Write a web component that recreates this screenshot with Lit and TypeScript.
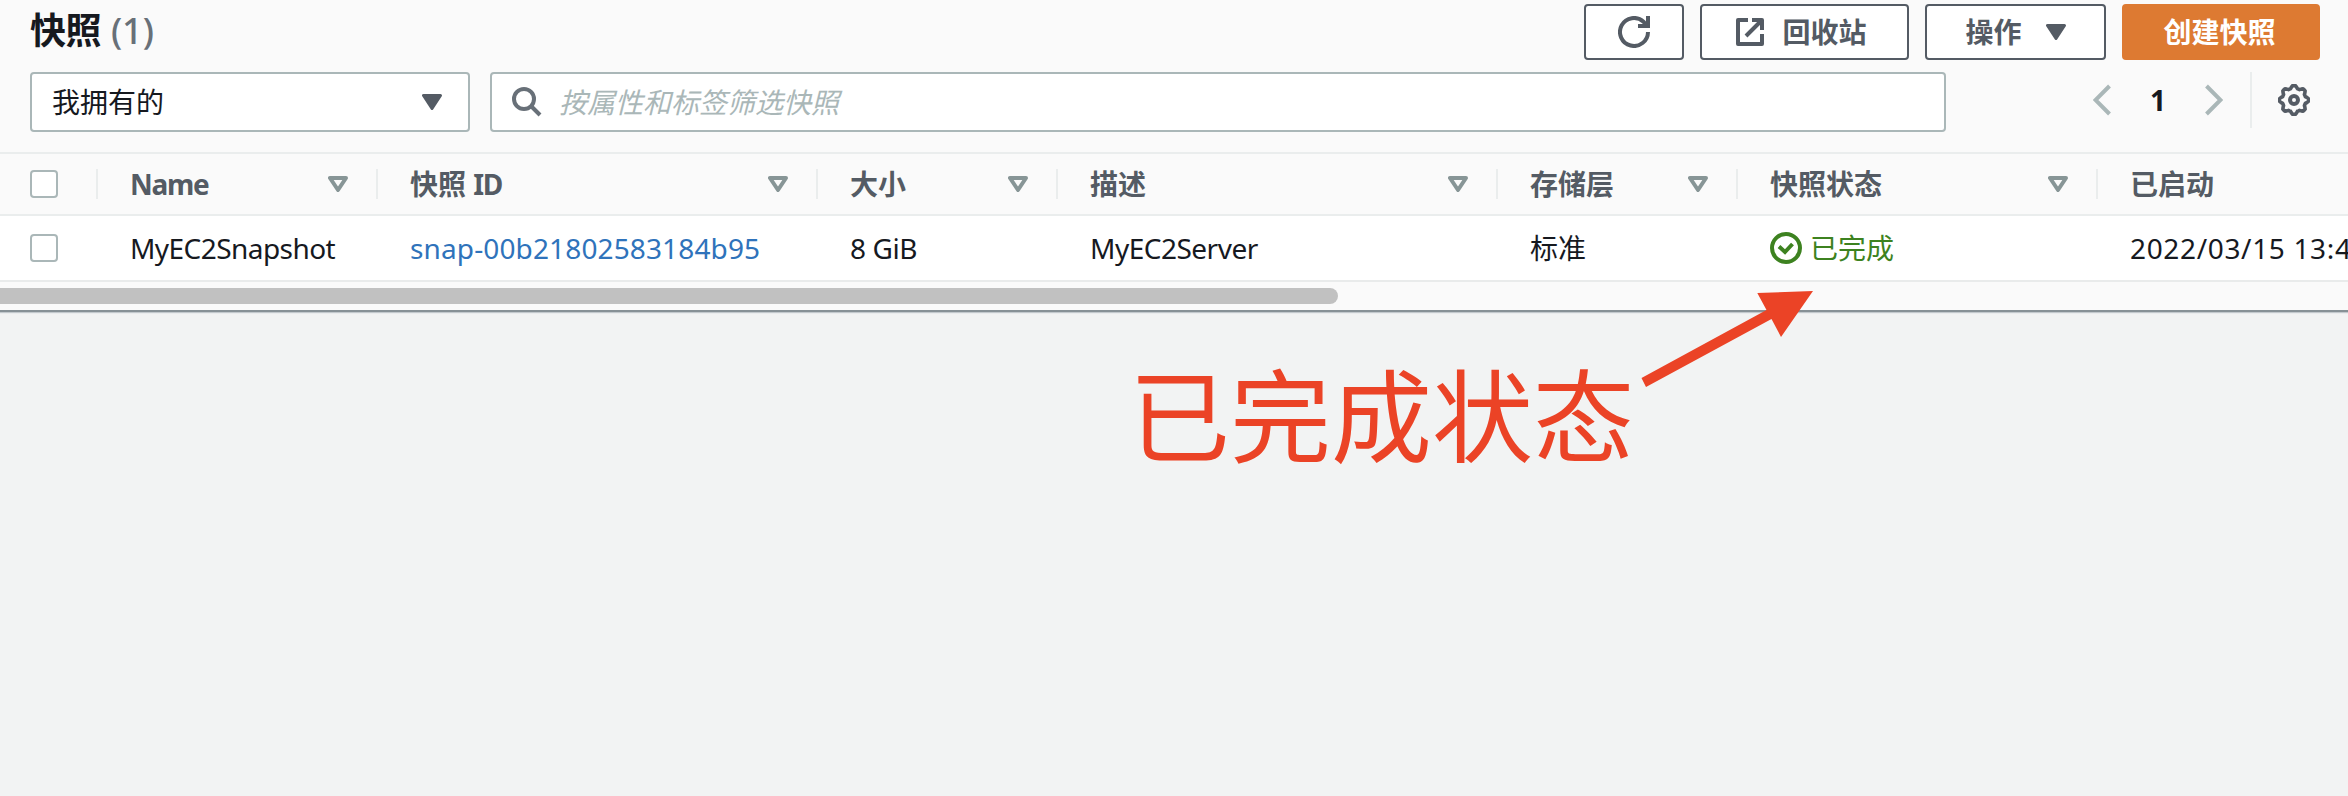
import { LitElement, html, css, svg, nothing } from "lit";
import { customElement } from "lit/decorators.js";
import { styleMap } from "lit/directives/style-map.js";

interface Column {
  label: unknown;
  width: number;
  sortable: boolean;
  value: unknown;
}

const gearOutline = Array.from({ length: 64 }, (_, i) => {
  const a = (i / 64) * Math.PI * 2;
  const r = 13.1 + 1.3 * Math.max(-1, Math.min(1, 1.8 * Math.cos(8 * a)));
  return `${(16 + r * Math.cos(a)).toFixed(2)},${(16 + r * Math.sin(a)).toFixed(2)}`;
}).join(" ");

const iconRefresh = svg`<svg class="icon" width="32" height="32" viewBox="0 0 32 32">
  <path d="M30 16A14 14 0 1 1 25.500 5.700L29 10" fill="none" stroke="currentColor" stroke-width="4"/>
  <path d="M30 0v10H20" fill="none" stroke="currentColor" stroke-width="4"/></svg>`;

const iconExternal = svg`<svg class="icon" width="28" height="28" viewBox="0 0 28 28">
  <path d="M12 2H2v24h24V16M16 2h10v10M26 2L10 18" fill="none" stroke="currentColor" stroke-width="4" stroke-linejoin="round"/></svg>`;

const iconCaret = svg`<svg class="icon" width="20" height="16" viewBox="0 0 20 16">
  <path d="M1.500 1.500h17L10 14.500z" fill="currentColor" stroke="currentColor" stroke-width="3" stroke-linejoin="round"/></svg>`;

const iconSort = svg`<svg class="icon" width="20" height="16" viewBox="0 0 20 16">
  <path d="M2 2h16l-8 12z" fill="none" stroke="currentColor" stroke-width="4" stroke-linejoin="round"/></svg>`;

const iconSearch = svg`<svg class="icon" width="30" height="30" viewBox="0 0 30 30">
  <circle cx="12" cy="12" r="10" fill="none" stroke="currentColor" stroke-width="4"/>
  <path d="M19 19l9 9" stroke="currentColor" stroke-width="4"/></svg>`;

const iconPrev = svg`<svg class="icon" width="18" height="32" viewBox="0 0 18 32">
  <path d="M16.500 2L2.500 16l14 14" fill="none" stroke="currentColor" stroke-width="4"/></svg>`;

const iconNext = svg`<svg class="icon" width="18" height="32" viewBox="0 0 18 32">
  <path d="M1.500 2l14 14-14 14" fill="none" stroke="currentColor" stroke-width="4"/></svg>`;

const iconGear = svg`<svg class="icon" width="32" height="32" viewBox="0 0 32 32">
  <polygon points=${gearOutline} fill="none" stroke="currentColor" stroke-width="3.600" stroke-linejoin="round"/>
  <circle cx="16" cy="16" r="4" fill="none" stroke="currentColor" stroke-width="4"/></svg>`;

const iconOk = svg`<svg class="icon" width="32" height="32" viewBox="0 0 32 32">
  <circle cx="16" cy="16" r="14" fill="none" stroke="currentColor" stroke-width="4"/>
  <path d="M9 14.500l6 5.500 7.500-8" fill="none" stroke="currentColor" stroke-width="4"/></svg>`;

@customElement("app-root")
export class AppRoot extends LitElement {
  private columns: Column[] = [
    { label: html`<span class="tight">Name</span>`, width: 280, sortable: true, value: html`<span class="name">MyEC2Snapshot</span>` },
    { label: html`快照 <span class="tight">ID</span>`, width: 440, sortable: true, value: html`<a class="link">snap-00b21802583184b95</a>` },
    { label: "大小", width: 240, sortable: true, value: html`<span class="size">8 GiB</span>` },
    { label: "描述", width: 440, sortable: true, value: html`<span class="desc">MyEC2Server</span>` },
    { label: "存储层", width: 240, sortable: true, value: "标准" },
    { label: "快照状态", width: 360, sortable: true, value: html`<span class="ok">${iconOk}<span>已完成</span></span>` },
    { label: "已启动", width: 250, sortable: false, value: html`<span class="date">2022/03/15 13:4</span>` },
  ];

  static styles = css`
    :host {
      display: block;
      position: relative;
      height: 796px;
      overflow: hidden;
      background: #f2f3f3;
      color: #16191f;
      font: 28px/40px "Noto Sans", "Noto Sans CJK SC", sans-serif;
      white-space: nowrap;
    }
    * { box-sizing: border-box; }
    .icon { display: block; flex: none; }
    .panel {
      background: #fafafa;
      border-bottom: 2px solid #879196;
      box-shadow: 0 1px 1px #c3c9cd;
      height: 312px;
    }
    .top {
      display: flex;
      justify-content: space-between;
      padding: 4px 28px 0 30px;
      height: 72px;
    }
    .title { margin: 0; font-size: 36px; line-height: 54px; font-weight: 700; letter-spacing: -0.5px; }
    .count { color: #687078; font-weight: 500; margin-left: 1px; letter-spacing: 0; }
    .actions { display: flex; gap: 16px; height: 56px; }
    .btn {
      display: flex;
      align-items: center;
      justify-content: center;
      border: 2px solid #545b64;
      border-radius: 4px;
      background: #fff;
      color: #545b64;
      font-weight: 700;
    }
    .refresh { width: 100px; }
    .recycle { width: 209px; gap: 18px; padding-right: 6px; }
    .menu { width: 181px; gap: 24px; }
    .primary { width: 198px; background: #dd7a32; border-color: #dd7a32; color: #fff; padding-right: 3px; }
    .filters { display: flex; height: 80px; padding: 0 38px 0 30px; }
    .select, .search {
      display: flex;
      align-items: center;
      height: 60px;
      border: 2px solid #aab7b8;
      border-radius: 4px;
      background: #fff;
    }
    .select { width: 440px; justify-content: space-between; padding: 0 26px 0 20px; }
    .select .icon { color: #545b64; }
    .search { width: 1456px; margin-left: 20px; padding-left: 20px; gap: 17px; color: #687078; }
    .hint { font-style: italic; color: #aab7b8; }
    .pager { display: flex; align-items: center; margin-left: auto; height: 56px; color: #aab7b8; }
    .page { width: 94px; text-align: center; color: #16191f; font-weight: 700; }
    .settings {
      display: flex;
      align-items: center;
      height: 56px;
      margin-left: 27px;
      padding-left: 26px;
      border-left: 2px solid #eaeded;
      color: #545b64;
    }
    .row { display: flex; align-items: center; height: 66px; border-bottom: 2px solid #e9ebeb; background: #fff; }
    .head {
      height: 64px;
      border-top: 2px solid #eaeded;
      border-bottom-color: #eaeded;
      background: #fafafa;
      color: #545b64;
      font-weight: 700;
    }
    .cell {
      display: flex;
      flex: none;
      align-items: center;
      justify-content: space-between;
      padding: 0 28px 0 32px;
      height: 30px;
    }
    .head .cell { border-right: 2px solid #eaeded; }
    .head .cell:last-child { border-right: none; }
    .head .icon { color: #879596; }
    .check-cell { width: 98px; padding: 0 0 0 30px; }
    .check { width: 28px; height: 28px; border: 2px solid #aab7b8; border-radius: 4px; background: #fff; }
    .tight { letter-spacing: -1.3px; }
    .name { letter-spacing: -0.55px; }
    .size { letter-spacing: -0.4px; }
    .desc { letter-spacing: -0.5px; }
    .date { letter-spacing: 0.65px; }
    .link { color: #2f73bb; letter-spacing: 0.13px; }
    .ok { display: flex; align-items: center; gap: 8px; color: #3d8220; }
    .scroll { padding-top: 6px; }
    .thumb { width: 1338px; height: 16px; background: #c1c1c1; border-radius: 0 8px 8px 0; }
    .note {
      position: absolute;
      left: 1129px;
      top: 339px;
      font: 101px/145px "Noto Sans CJK SC", sans-serif;
      color: #eb4326;
    }
    .arrow { position: absolute; left: 1636px; top: 286px; }
  `;

  render() {
    return html`
      <section class="panel">
        <header class="top">
          <h1 class="title">快照 <span class="count">(1)</span></h1>
          <div class="actions">
            <div class="btn refresh">${iconRefresh}</div>
            <div class="btn recycle">${iconExternal}<span>回收站</span></div>
            <div class="btn menu"><span>操作</span>${iconCaret}</div>
            <div class="btn primary"><span>创建快照</span></div>
          </div>
        </header>
        <div class="filters">
          <div class="select"><span>我拥有的</span>${iconCaret}</div>
          <div class="search">${iconSearch}<span class="hint">按属性和标签筛选快照</span></div>
          <nav class="pager">
            ${iconPrev}<span class="page">1</span>${iconNext}
            <div class="settings">${iconGear}</div>
          </nav>
        </div>
        <div class="row head">
          <div class="cell check-cell"><span class="check"></span></div>
          ${this.columns.map(
            (c) => html`<div class="cell" style=${styleMap({ width: `${c.width}px` })}>
              <span>${c.label}</span>${c.sortable ? iconSort : nothing}
            </div>`
          )}
        </div>
        <div class="row">
          <div class="cell check-cell"><span class="check"></span></div>
          ${this.columns.map(
            (c) => html`<div class="cell" style=${styleMap({ width: `${c.width}px` })}>${c.value}</div>`
          )}
        </div>
        <div class="scroll"><div class="thumb"></div></div>
      </section>
      <div class="note">已完成状态</div>
      <svg class="arrow" width="180" height="104" viewBox="1636 286 180 104">
        <path d="M1813 291L1781 337L1771.500 319L1646 387L1641.500 378L1766.500 310L1757.300 293z" fill="#eb4326"/>
      </svg>
    `;
  }
}
